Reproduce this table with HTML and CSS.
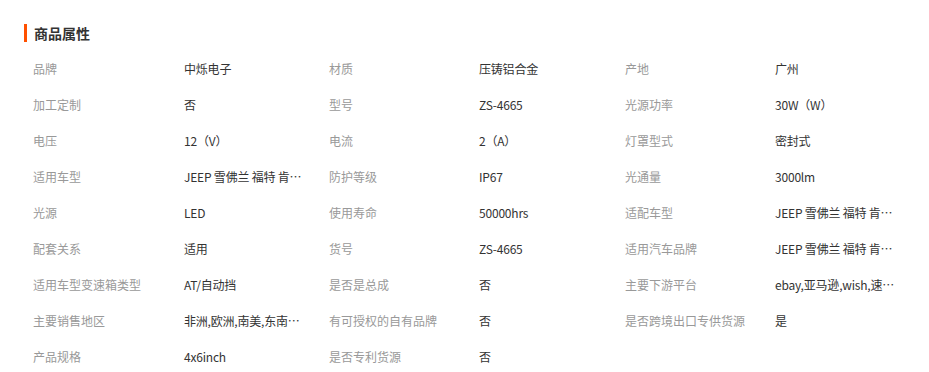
FILE: index.html
```html
<!DOCTYPE html>
<html lang="zh-CN">
<head>
<meta charset="utf-8">
<link rel="stylesheet" href="styles.css">
</head>
<body>
<div class="attrs">
  <h2 class="attrs-title">商品属性</h2>
  <div class="attrs-grid">
    <div class="k">品牌</div><div class="v">中烁电子</div>
    <div class="k">材质</div><div class="v">压铸铝合金</div>
    <div class="k">产地</div><div class="v">广州</div>

    <div class="k">加工定制</div><div class="v">否</div>
    <div class="k">型号</div><div class="v">ZS-4665</div>
    <div class="k">光源功率</div><div class="v">30W（W）</div>

    <div class="k">电压</div><div class="v">12（V）</div>
    <div class="k">电流</div><div class="v">2（A）</div>
    <div class="k">灯罩型式</div><div class="v">密封式</div>

    <div class="k">适用车型</div><div class="v">JEEP 雪佛兰 福特 肯…</div>
    <div class="k">防护等级</div><div class="v">IP67</div>
    <div class="k">光通量</div><div class="v">3000lm</div>

    <div class="k">光源</div><div class="v">LED</div>
    <div class="k">使用寿命</div><div class="v">50000hrs</div>
    <div class="k">适配车型</div><div class="v">JEEP 雪佛兰 福特 肯…</div>

    <div class="k">配套关系</div><div class="v">适用</div>
    <div class="k">货号</div><div class="v">ZS-4665</div>
    <div class="k">适用汽车品牌</div><div class="v">JEEP 雪佛兰 福特 肯…</div>

    <div class="k">适用车型变速箱类型</div><div class="v">AT/自动挡</div>
    <div class="k">是否是总成</div><div class="v">否</div>
    <div class="k">主要下游平台</div><div class="v">ebay,亚马逊,wish,速…</div>

    <div class="k">主要销售地区</div><div class="v">非洲,欧洲,南美,东南…</div>
    <div class="k">有可授权的自有品牌</div><div class="v">否</div>
    <div class="k">是否跨境出口专供货源</div><div class="v">是</div>

    <div class="k">产品规格</div><div class="v">4x6inch</div>
    <div class="k">是否专利货源</div><div class="v">否</div>
  </div>
</div>
</body>
</html>
```

FILE: styles.css
```css
html, body {
  margin: 0;
  padding: 0;
  background: #fff;
}
body {
  font-family: "Microsoft YaHei", "Noto Sans CJK SC", "Noto Sans", sans-serif;
  font-size: 12px;
  color: #333;
}
.attrs {
  padding: 24px 0 0 24px;
}
.attrs-title {
  margin: 0;
  font-size: 14px;
  font-weight: bold;
  color: #333;
  line-height: 18px;
  border-left: 3px solid #ff5000;
  padding-left: 7px;
}
.attrs-grid {
  display: grid;
  grid-template-columns: 151px 145px 150px 146px 150px 150px;
  grid-auto-rows: 36px;
  margin-top: 9px;
  padding-left: 9px;
}
.k, .v {
  line-height: 36px;
  white-space: nowrap;
}
.k {
  color: #999;
}
.v {
  color: #333;
  letter-spacing: -0.2px;
}
```
